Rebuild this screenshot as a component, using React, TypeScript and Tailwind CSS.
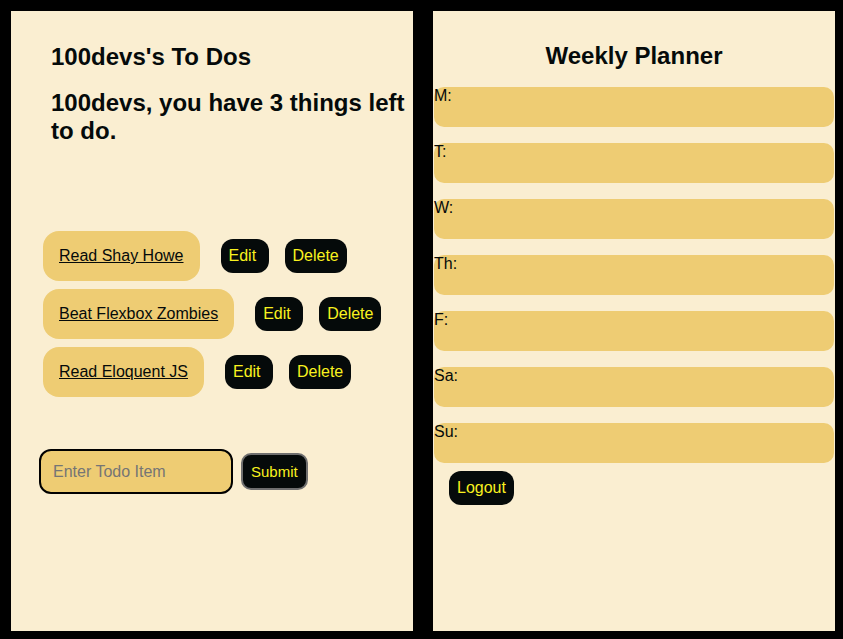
import React from "react";

const todos = [
  { text: "Read Shay Howe" },
  { text: "Beat Flexbox Zombies" },
  { text: "Read Eloquent JS" },
];

const days = ["M:", "T:", "W:", "Th:", "F:", "Sa:", "Su:"];

export default function App() {
  return (
    <div
      className="w-[843px] h-[639px] bg-black flex gap-5 pl-[11px] pt-[11px] overflow-hidden text-[#050a0a]"
      style={{ fontFamily: '"Liberation Sans", Arial, sans-serif' }}
    >
      {/* Left panel */}
      <div className="w-[402px] h-[620px] bg-[#faeed1] flex flex-col">
        <h1 className="ml-10 mt-8 text-[24px] leading-[28px] font-bold">100devs's To Dos</h1>
        <h2 className="ml-10 mt-[18px] text-[24px] leading-[28px] font-bold">
          100devs, you have 3 things left to do.
        </h2>
        <ul className="mt-[86px] ml-8 flex flex-col gap-2">
          {todos.map((t) => (
            <li key={t.text} className="flex items-center">
              <span className="bg-[#eecc73] rounded-2xl px-4 py-4 text-[16px] leading-[18px] underline">
                {t.text}
              </span>
              <button className="ml-[21px] w-[48px] pl-2 text-left bg-[#050a0a] text-[#f9f21f] rounded-xl py-2 text-[16px] leading-[18px]">
                Edit
              </button>
              <button className="ml-4 px-2 bg-[#050a0a] text-[#f9f21f] rounded-xl py-2 text-[16px] leading-[18px]">
                Delete
              </button>
            </li>
          ))}
        </ul>
        <form className="mt-[52px] ml-7 flex items-center gap-2" onSubmit={(e) => e.preventDefault()}>
          <input
            placeholder="Enter Todo Item"
            className="w-[194px] h-[45px] bg-[#eecc73] border-2 border-black rounded-[12px] pl-3 text-[16px] placeholder:text-[#757575] outline-none"
          />
          <button className="bg-[#050a0a] text-[#f9f21f] border-2 border-[#6f6f6f] rounded-[10px] px-2 py-2 text-[15px] leading-[17px]">
            Submit
          </button>
        </form>
      </div>

      {/* Right panel */}
      <div className="w-[402px] h-[620px] bg-[#faeed1] flex flex-col">
        <h1 className="mt-[31px] text-center text-[24px] leading-[28px] font-bold">Weekly Planner</h1>
        <div className="mt-[17px] flex flex-col gap-4 mx-px">
          {days.map((d) => (
            <div key={d} className="h-10 bg-[#eecc73] rounded-[10px] text-[16px] leading-[18px]">
              {d}
            </div>
          ))}
        </div>
        <div className="mt-2 ml-4">
          <button className="bg-[#050a0a] text-[#f9f21f] rounded-xl px-2 py-2 text-[16px] leading-[18px]">
            Logout
          </button>
        </div>
      </div>
    </div>
  );
}
